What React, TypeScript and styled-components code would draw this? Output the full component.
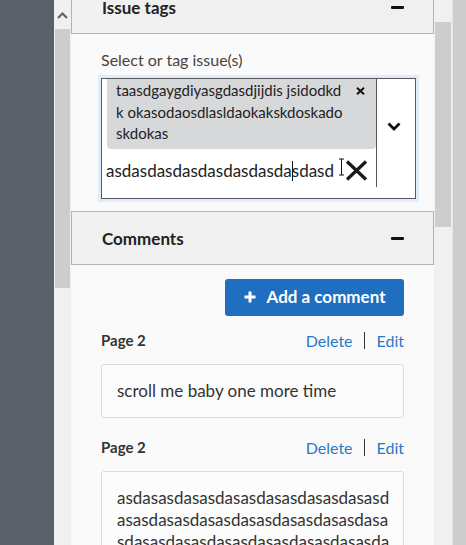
import React from 'react';
import styled, { createGlobalStyle } from 'styled-components';

const GlobalStyle = createGlobalStyle`
  html, body {
    margin: 0;
    padding: 0;
    overflow: hidden;
    background: #5c606a;
  }
  body {
    font-family: Lato, "Noto Sans", "Liberation Sans", sans-serif;
    color: #333;
  }
`;

const commentLines = [
  'asdasasdasasdasasdasasdasasdasasd',
  'asasdasasdasasdasasdasasdasasdasa',
  'sdasasdasasdasasdasasdasasdasasda',
  'sasdasasdasasdasasdasasdasasdasas',
];

const chipLines = [
  'taasdgaygdiyasgdasdjijdis jsidodkd',
  'k okasodaosdlasldaokakskdoskado',
  'skdokas',
];

const Frame = styled.div`
  display: flex;
  height: 545px;
  width: 466px;
  overflow: hidden;
`;

const Sidebar = styled.div`
  width: 54px;
  flex-shrink: 0;
  background: #5c606a;
`;

const Track = styled.div<{ $width: number }>`
  width: ${p => p.$width}px;
  flex-shrink: 0;
  background: #f0f0f0;
  display: flex;
  flex-direction: column;
`;

const ArrowButton = styled.div`
  height: 28px;
  display: flex;
  align-items: center;
  justify-content: center;
  padding-top: 2px;
  box-sizing: border-box;
`;

const Thumb = styled.div<{ $top: number; $length: number }>`
  margin: ${p => p.$top}px 1px 0 1px;
  height: ${p => p.$length}px;
  background: #cdcdcd;
`;

const Gutter = styled.div`
  width: 14px;
  flex-shrink: 0;
  background: #cdcdcd;
  border-left: 1px solid #e6e6e6;
  box-sizing: border-box;
`;

const Panel = styled.div`
  width: 363px;
  flex-shrink: 0;
  background: #fafafa;
  overflow: hidden;
`;

const ScrollContent = styled.div`
  margin-top: -20px;
`;

const SectionHeader = styled.div`
  height: 54px;
  box-sizing: border-box;
  border: 1px solid #b3b3b3;
  background: #f0f0f0;
  display: flex;
  align-items: center;
  justify-content: space-between;
  padding: 0 29px 0 30px;
`;

const SectionTitle = styled.h2`
  margin: 0;
  font-size: 17px;
  font-weight: 700;
  color: #222;
`;

const Minus = styled.span`
  width: 13px;
  height: 3px;
  border-radius: 1px;
  background: #111;
`;

const SectionBody = styled.div<{ $top: number; $bottom: number }>`
  padding: ${p => p.$top}px 30px ${p => p.$bottom}px 30px;
`;

const FieldLabel = styled.div`
  font-size: 16px;
  line-height: 22px;
  color: #444;
  margin-bottom: 7px;
`;

const SelectBox = styled.div`
  display: flex;
  height: 121px;
  box-sizing: border-box;
  border: 1px solid #595959;
  background: #fff;
  box-shadow: 0 0 0 3px #e1ecfb;
  margin-right: -12px;
  overflow: hidden;
`;

const ValueArea = styled.div`
  flex: 1;
  min-width: 0;
  padding-left: 4px;
  display: flex;
  flex-direction: column;
`;

const Chip = styled.div`
  margin: -3px 0 0 1px;
  padding: 4px 11px 4px 9px;
  background: #d7d8da;
  border-radius: 4px;
  display: flex;
  justify-content: space-between;
  align-items: flex-start;
`;

const ChipLabel = styled.div`
  font-size: 15px;
  line-height: 21.5px;
  color: #222;
`;

const ChipLine = styled.span`
  display: block;
  white-space: nowrap;
`;

const ChipRemove = styled.svg`
  margin-top: 7px;
  flex-shrink: 0;
`;

const InputRow = styled.div`
  display: flex;
  align-items: center;
  height: 30px;
  margin-top: 7px;
`;

const InputText = styled.span`
  font-size: 17px;
  color: #222;
  white-space: nowrap;
`;

const Caret = styled.span`
  display: inline-block;
  width: 1px;
  height: 20px;
  margin-right: -1px;
  vertical-align: -4px;
  background: #111;
`;

const PointerIcon = styled.svg`
  margin: -8px 0 0 4px;
  flex-shrink: 0;
`;

const ClearIcon = styled.svg`
  flex-shrink: 0;
`;

const Indicator = styled.div`
  width: 39px;
  flex-shrink: 0;
  display: flex;
  align-items: flex-start;
`;

const Separator = styled.span`
  width: 1px;
  height: 108px;
  background: #555;
`;

const ChevronIcon = styled.svg`
  margin: 43px 0 0 10px;
`;

const ButtonRow = styled.div`
  display: flex;
  justify-content: flex-end;
`;

const AddButton = styled.button`
  height: 37px;
  width: 179px;
  border: none;
  border-radius: 3px;
  background: #1f6ebf;
  color: #fff;
  font-family: inherit;
  font-size: 17px;
  font-weight: 700;
  display: flex;
  align-items: center;
  justify-content: center;
  gap: 11px;
  padding: 0 0 2px 0;
  cursor: pointer;
`;

const CommentItem = styled.div<{ $gap: number }>`
  margin-top: ${p => p.$gap}px;
`;

const CommentMeta = styled.div`
  display: flex;
  justify-content: space-between;
  align-items: center;
  height: 24px;
  margin-bottom: 12px;
`;

const PageLabel = styled.span`
  font-size: 15px;
  font-weight: 700;
  color: #333;
`;

const Actions = styled.div`
  display: flex;
  align-items: center;
  font-size: 16px;
`;

const ActionLink = styled.a`
  color: #2b77c8;
  text-decoration: none;
  cursor: pointer;
`;

const ActionDivider = styled.span`
  width: 1px;
  height: 17px;
  background: #333;
  margin: 0 12px 0 11px;
`;

const CommentCard = styled.div`
  border: 1px solid #dcdcdc;
  border-radius: 3px;
  background: #fcfcfc;
  padding: 15px;
  font-size: 17px;
  line-height: 22px;
  color: #333;
`;

const CardLine = styled.span`
  display: block;
  white-space: nowrap;
`;

const comments = [
  { id: 1, page: 'Page 2', lines: ['scroll me baby one more time'], gap: 12 },
  { id: 2, page: 'Page 2', lines: commentLines, gap: 17 },
];

const App: React.FC = () => {
  return (
    <>
      <GlobalStyle />
      <Frame>
        <Sidebar />
        <Track $width={17}>
          <ArrowButton>
            <svg width="11" height="7" viewBox="0 0 11 7">
              <path d="M1 6 L5.5 1.5 L10 6" fill="none" stroke="#5f5f5f" strokeWidth="2" />
            </svg>
          </ArrowButton>
          <Thumb $top={1} $length={259} />
        </Track>
        <Panel>
          <ScrollContent>
            <SectionHeader>
              <SectionTitle>Issue tags</SectionTitle>
              <Minus />
            </SectionHeader>
            <SectionBody $top={15} $bottom={12}>
              <FieldLabel>Select or tag issue(s)</FieldLabel>
              <SelectBox>
                <ValueArea>
                  <Chip>
                    <ChipLabel>
                      {chipLines.map(line => (
                        <ChipLine key={line}>{line}</ChipLine>
                      ))}
                    </ChipLabel>
                    <ChipRemove width="9" height="8" viewBox="0 0 9 8">
                      <path d="M1 0.8 L8 7.2 M8 0.8 L1 7.2" fill="none" stroke="#111" strokeWidth="2" />
                    </ChipRemove>
                  </Chip>
                  <InputRow>
                    <InputText>
                      asdasdasdasdasdasdasda<Caret />sdasd
                    </InputText>
                    <PointerIcon width="7" height="18" viewBox="0 0 7 18">
                      <path d="M1 1 H6 M3.5 1 V17 M1 17 H6" fill="none" stroke="#111" strokeWidth="1" />
                    </PointerIcon>
                    <ClearIcon width="23" height="21" viewBox="0 0 23 21">
                      <path d="M2 1.5 L21 19.5 M21 1.5 L2 19.5" fill="none" stroke="#1a1a1a" strokeWidth="3.2" />
                    </ClearIcon>
                  </InputRow>
                </ValueArea>
                <Indicator>
                  <Separator />
                  <ChevronIcon width="14" height="9" viewBox="0 0 14 9">
                    <path d="M1.5 1.5 L7 7 L12.5 1.5" fill="none" stroke="#111" strokeWidth="2.8" />
                  </ChevronIcon>
                </Indicator>
              </SelectBox>
            </SectionBody>
            <SectionHeader>
              <SectionTitle>Comments</SectionTitle>
              <Minus />
            </SectionHeader>
            <SectionBody $top={14} $bottom={20}>
              <ButtonRow>
                <AddButton>
                  <svg width="12" height="12" viewBox="0 0 12 12">
                    <path d="M6 0.5 V11.5 M0.5 6 H11.5" stroke="#fff" strokeWidth="3" />
                  </svg>
                  Add a comment
                </AddButton>
              </ButtonRow>
              {comments.map(comment => (
                <CommentItem key={comment.id} $gap={comment.gap}>
                  <CommentMeta>
                    <PageLabel>{comment.page}</PageLabel>
                    <Actions>
                      <ActionLink>Delete</ActionLink>
                      <ActionDivider />
                      <ActionLink>Edit</ActionLink>
                    </Actions>
                  </CommentMeta>
                  <CommentCard>
                    {comment.lines.map((line, i) => (
                      <CardLine key={i}>{line}</CardLine>
                    ))}
                  </CommentCard>
                </CommentItem>
              ))}
            </SectionBody>
          </ScrollContent>
        </Panel>
        <Track $width={18}>
          <Thumb $top={22} $length={205} />
        </Track>
        <Gutter />
      </Frame>
    </>
  );
};

export default App;
